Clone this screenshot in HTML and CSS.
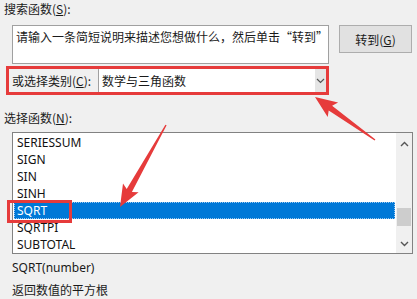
FILE: index.html
```html
<!DOCTYPE html>
<html>
<head>
<meta charset="utf-8">
<link rel="stylesheet" href="styles.css">
</head>
<body>
<div class="dialog">
  <div class="label">搜索函数(<u>S</u>):</div>
  <div class="search-row">
    <div class="textarea">请输入一条简短说明来描述您想做什么，然后单击“转到”</div>
    <div class="button">转到(<u>G</u>)</div>
  </div>
  <div class="category">
    <div class="cat-label">或选择类别(<u>C</u>):</div>
    <div class="combo">
      <div class="combo-text">数学与三角函数</div>
      <div class="combo-btn">
        <svg width="9" height="6" viewBox="0 0 9 6"><path d="M1 1 L4.5 4.5 L8 1" fill="none" stroke="#555" stroke-width="1.2"/></svg>
      </div>
    </div>
  </div>
  <div class="label label-fn">选择函数(<u>N</u>):</div>
  <div class="listbox">
    <div class="items">
      <div class="item">SERIESSUM</div>
      <div class="item">SIGN</div>
      <div class="item">SIN</div>
      <div class="item">SINH</div>
      <div class="item selected">SQRT</div>
      <div class="item">SQRTPI</div>
      <div class="item">SUBTOTAL</div>
    </div>
    <div class="scrollbar">
      <svg class="sb-up" width="9" height="6" viewBox="0 0 9 6"><path d="M1 5 L4.5 1.5 L8 5" fill="none" stroke="#555" stroke-width="1.4"/></svg>
      <div class="sb-track"><div class="sb-thumb"></div></div>
      <svg class="sb-down" width="9" height="6" viewBox="0 0 9 6"><path d="M1 1 L4.5 4.5 L8 1" fill="none" stroke="#555" stroke-width="1.4"/></svg>
    </div>
  </div>
  <div class="syntax">SQRT(number)</div>
  <div class="desc">返回数值的平方根</div>

  <div class="mark-sqrt"></div>
  <svg class="arrows" width="417" height="299" viewBox="0 0 417 299">
    <polygon fill="#e63b3b" points="315,97 338.1,102.5 332.1,105.7 375.4,139.4 374.6,140.6 328.7,110.5 327.7,117.1"/>
    <polygon fill="#e63b3b" points="120,207 138.6,192.2 131.9,191.9 166.6,125.3 165.4,124.7 126.7,188.9 123,183.4"/>
  </svg>
</div>
</body>
</html>
```
FILE: styles.css
```css
html, body {
  margin: 0;
  padding: 0;
}
body {
  width: 417px;
  height: 299px;
  background: #f0f0f0;
  overflow: hidden;
  font-family: "Noto Sans CJK SC", "Noto Sans", sans-serif;
  font-size: 12px;
  color: #1a1a1a;
}
u {
  text-decoration: underline;
  text-underline-offset: 1px;
}
.dialog {
  position: relative;
  width: 417px;
  height: 299px;
  display: flex;
  flex-direction: column;
}
.label {
  height: 18px;
  line-height: 18px;
  padding-left: 4px;
  margin-top: 0;
}
.search-row {
  display: flex;
  align-items: flex-start;
  margin-top: 7px;
  padding-left: 12px;
}
.textarea {
  box-sizing: border-box;
  width: 317px;
  height: 39px;
  background: #fff;
  border: 1px solid #a0a0a0;
  padding: 2px 0 0 3px;
  line-height: 18px;
  white-space: nowrap;
  overflow: hidden;
}
.button {
  box-sizing: border-box;
  margin-left: 10px;
  width: 73px;
  height: 28px;
  background: #e1e1e1;
  border: 1px solid #adadad;
  display: flex;
  align-items: center;
  justify-content: center;
}
.category {
  box-sizing: border-box;
  margin-top: 2px;
  margin-left: 6px;
  width: 323px;
  height: 29px;
  border: 3px solid #e63b3b;
  display: flex;
  align-items: stretch;
}
.cat-label {
  width: 86px;
  padding-left: 3px;
  line-height: 23px;
}
.combo {
  flex: 1;
  display: flex;
  background: #fff;
  border-left: 1px solid #a0a0a0;
}
.combo-text {
  flex: 1;
  line-height: 23px;
  padding-left: 3px;
}
.combo-btn {
  width: 11px;
  background: #e5e5e5;
  display: flex;
  align-items: center;
  justify-content: center;
}
.label-fn {
  margin-top: 14px;
}
.listbox {
  box-sizing: border-box;
  margin-top: 5px;
  margin-left: 12px;
  width: 401px;
  height: 122px;
  background: #fff;
  border: 1px solid #828282;
  display: flex;
}
.items {
  flex: 1;
  padding: 1px 1px 0 1px;
  font-family: "Noto Sans", "Open Sans", sans-serif;
  font-size: 12px;
}
.item {
  height: 17px;
  line-height: 17px;
  padding-left: 3px;
  color: #111;
}
.item.selected {
  background: #0078d7;
  color: #fff;
  outline: 1px dotted #9cc9f0;
  outline-offset: -1px;
}
.scrollbar {
  width: 16px;
  background: #f0f0f0;
  display: flex;
  flex-direction: column;
  align-items: center;
  padding-top: 8px;
  padding-bottom: 6px;
}
.sb-track {
  flex: 1;
  width: 14px;
  display: flex;
  flex-direction: column;
  justify-content: flex-end;
  padding-bottom: 15px;
}
.sb-thumb {
  height: 18px;
  background: #cdcdcd;
}
.syntax {
  margin-top: 5px;
  padding-left: 12px;
  line-height: 18px;
  font-family: "Noto Sans", "Open Sans", sans-serif;
}
.desc {
  margin-top: 4px;
  padding-left: 12px;
  line-height: 18px;
}
.mark-sqrt {
  position: absolute;
  left: 7px;
  top: 200px;
  width: 59px;
  height: 17px;
  border: 3px solid #e63b3b;
}
.arrows {
  position: absolute;
  left: 0;
  top: 0;
  pointer-events: none;
}
```
